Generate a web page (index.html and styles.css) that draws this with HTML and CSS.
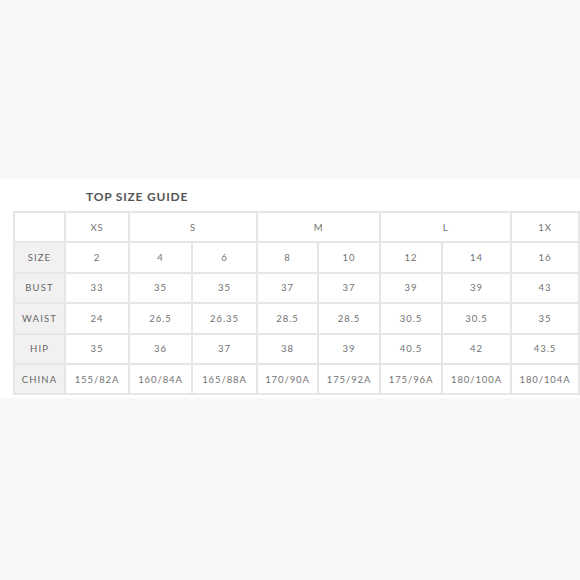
FILE: index.html
```html
<!DOCTYPE html>
<html>
<head>
<meta charset="utf-8">
<link rel="stylesheet" href="styles.css">
</head>
<body>
<div class="top"></div>
<section class="band">
  <h1 class="title">TOP SIZE GUIDE</h1>
  <table class="guide">
    <colgroup>
      <col class="c0"><col class="c1"><col class="c2"><col class="c3"><col class="c4"><col class="c5"><col class="c6"><col class="c7"><col class="c8">
    </colgroup>
    <tr><td class="blank"></td><td>XS</td><td colspan="2">S</td><td colspan="2">M</td><td colspan="2">L</td><td>1X</td></tr>
    <tr><th>SIZE</th><td>2</td><td>4</td><td>6</td><td>8</td><td>10</td><td>12</td><td>14</td><td>16</td></tr>
    <tr><th>BUST</th><td>33</td><td>35</td><td>35</td><td>37</td><td>37</td><td>39</td><td>39</td><td>43</td></tr>
    <tr><th>WAIST</th><td>24</td><td>26.5</td><td>26.35</td><td>28.5</td><td>28.5</td><td>30.5</td><td>30.5</td><td>35</td></tr>
    <tr><th>HIP</th><td>35</td><td>36</td><td>37</td><td>38</td><td>39</td><td>40.5</td><td>42</td><td>43.5</td></tr>
    <tr><th>CHINA</th><td>155/82A</td><td>160/84A</td><td>165/88A</td><td>170/90A</td><td>175/92A</td><td>175/96A</td><td>180/100A</td><td>180/104A</td></tr>
  </table>
</section>
<div class="bottom"></div>
</body>
</html>
```
FILE: styles.css
```css
html, body {
  margin: 0;
  padding: 0;
  background: #f8f8f8;
  font-family: "Lato", "Open Sans", sans-serif;
}
.top {
  height: 179px;
}
.band {
  background: #ffffff;
  height: 219px;
  padding: 0 0 0 13px;
  box-sizing: border-box;
  overflow: hidden;
}
.title {
  margin: 0;
  padding: 11px 0 0 73px;
  height: 32px;
  box-sizing: border-box;
  font-size: 12px;
  font-weight: 700;
  letter-spacing: 0.8px;
  color: #555555;
  line-height: 14px;
}
.guide {
  border-collapse: collapse;
  table-layout: fixed;
  width: 565px;
}
.c0 { width: 51px; }
.c1 { width: 64px; }
.c2 { width: 63px; }
.c3 { width: 65px; }
.c4 { width: 61px; }
.c5 { width: 62px; }
.c6 { width: 62px; }
.c7 { width: 69px; }
.c8 { width: 68px; }
.guide td, .guide th {
  border: 2px solid #e6e6e6;
  height: 28.4px;
  padding: 0;
  text-align: center;
  vertical-align: middle;
  font-size: 9.5px;
  font-weight: 400;
  letter-spacing: 0.9px;
  color: #727272;
}
.guide th {
  background: #f1f1f1;
  color: #666666;
  letter-spacing: 1.1px;
}
.guide td.blank {
  background: #ffffff;
}
```
